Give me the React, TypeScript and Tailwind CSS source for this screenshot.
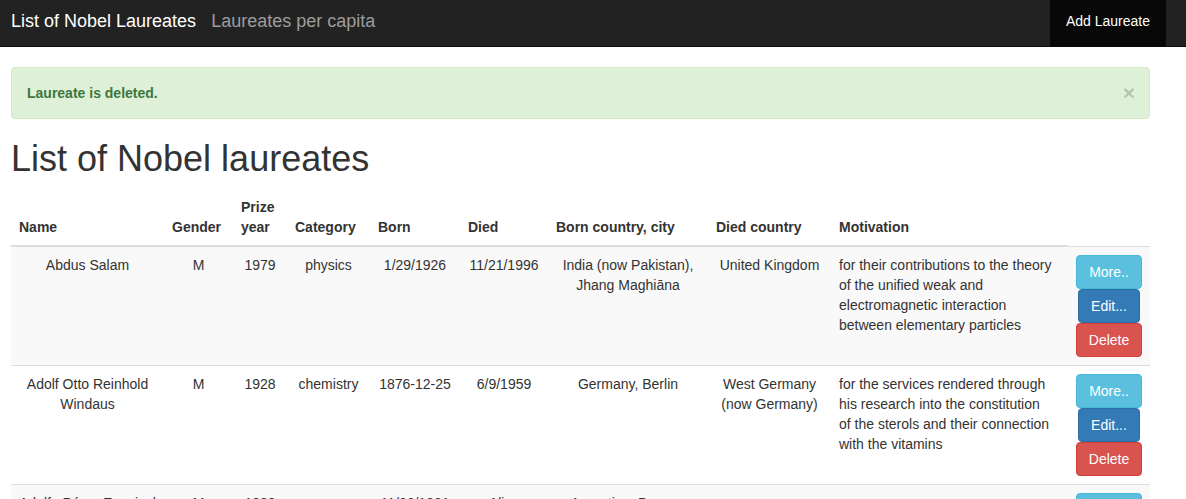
import React from "react";

type Row = {
  name: string;
  gender: string;
  year: string;
  category: string;
  born: string;
  died: string;
  bornPlace: string;
  diedCountry: string;
  motivation: string;
};

const rows: Row[] = [
  {
    name: "Abdus Salam",
    gender: "M",
    year: "1979",
    category: "physics",
    born: "1/29/1926",
    died: "11/21/1996",
    bornPlace: "India (now Pakistan), Jhang Maghiāna",
    diedCountry: "United Kingdom",
    motivation:
      "for their contributions to the theory of the unified weak and electromagnetic interaction between elementary particles",
  },
  {
    name: "Adolf Otto Reinhold Windaus",
    gender: "M",
    year: "1928",
    category: "chemistry",
    born: "1876-12-25",
    died: "6/9/1959",
    bornPlace: "Germany, Berlin",
    diedCountry: "West Germany (now Germany)",
    motivation:
      "for the services rendered through his research into the constitution of the sterols and their connection with the vitamins",
  },
  {
    name: "Adolfo Pérez Esquivel",
    gender: "M",
    year: "1980",
    category: "peace",
    born: "11/26/1931",
    died: "Alive",
    bornPlace: "Argentina, Buenos Aires",
    diedCountry: "",
    motivation: "",
  },
];

const widths = [153, 69, 54, 83, 90, 88, 160, 123, 237, 82];
const headers = [
  "Name",
  "Gender",
  "Prize year",
  "Category",
  "Born",
  "Died",
  "Born country, city",
  "Died country",
  "Motivation",
];

export default function App() {
  return (
    <div
      className="min-h-[499px] bg-white text-[#333] text-[14px] leading-[20px]"
      style={{ fontFamily: '"Liberation Sans", Arial, sans-serif' }}
    >
      <nav className="flex h-[47px] items-stretch border-b border-[#080808] bg-[#222]">
        <div className="flex items-center pb-[4px] pl-[11px] text-[18px] leading-[20px] text-white">
          List of Nobel Laureates
        </div>
        <div className="flex items-center pb-[4px] pl-[15px] text-[18px] leading-[20px] text-[#9d9d9d]">
          Laureates per capita
        </div>
        <div className="ml-auto mr-[20px] flex items-center bg-[#080808] px-[16px] pb-[4px] text-white">
          Add Laureate
        </div>
      </nav>

      <div className="ml-[11px] w-[1139px]">
        <div className="mt-[20px] flex items-center justify-between rounded-[4px] border border-[#d6e9c6] bg-[#dff0d8] py-[15px] pl-[15px] pr-[15px] text-[#3c763d]">
          <span className="font-bold">Laureate is deleted.</span>
          <span className="-mr-[1px] text-[21px] font-bold leading-[20px] text-black/20">×</span>
        </div>

        <h1 className="mt-[20px] mb-[10px] text-[36px] leading-[40px] font-normal">
          List of Nobel laureates
        </h1>

        <table className="w-[1139px] table-fixed border-collapse">
          <colgroup>
            {widths.map((w, i) => (
              <col key={i} style={{ width: w }} />
            ))}
          </colgroup>
          <thead>
            <tr>
              {headers.map((h) => (
                <th
                  key={h}
                  className="border-b-2 border-[#ddd] p-[8px] text-left align-bottom font-bold"
                >
                  {h}
                </th>
              ))}
            </tr>
          </thead>
          <tbody>
            {rows.map((r, i) => (
              <tr key={i} className={i % 2 === 0 ? "bg-[#f9f9f9]" : "bg-white"}>
                {[r.name, r.gender, r.year, r.category, r.born, r.died, r.bornPlace, r.diedCountry].map(
                  (v, j) => (
                    <td key={j} className="border-t border-[#ddd] p-[8px] text-center align-top">
                      {v}
                    </td>
                  )
                )}
                <td className="border-t border-[#ddd] py-[8px] pl-[8px] pr-[15px] text-left align-top">
                  {r.motivation}
                </td>
                <td className="border-t border-[#ddd] p-[8px] align-top">
                  <div className="flex flex-col items-center">
                    <button className="rounded-[4px] border border-[#46b8da] bg-[#5bc0de] px-[12px] py-[6px] text-white">
                      More..
                    </button>
                    <button className="rounded-[4px] border border-[#2e6da4] bg-[#337ab7] px-[12px] py-[6px] text-white">
                      Edit...
                    </button>
                    <button className="rounded-[4px] border border-[#d43f3a] bg-[#d9534f] px-[12px] py-[6px] text-white">
                      Delete
                    </button>
                  </div>
                </td>
              </tr>
            ))}
          </tbody>
        </table>
      </div>
    </div>
  );
}
